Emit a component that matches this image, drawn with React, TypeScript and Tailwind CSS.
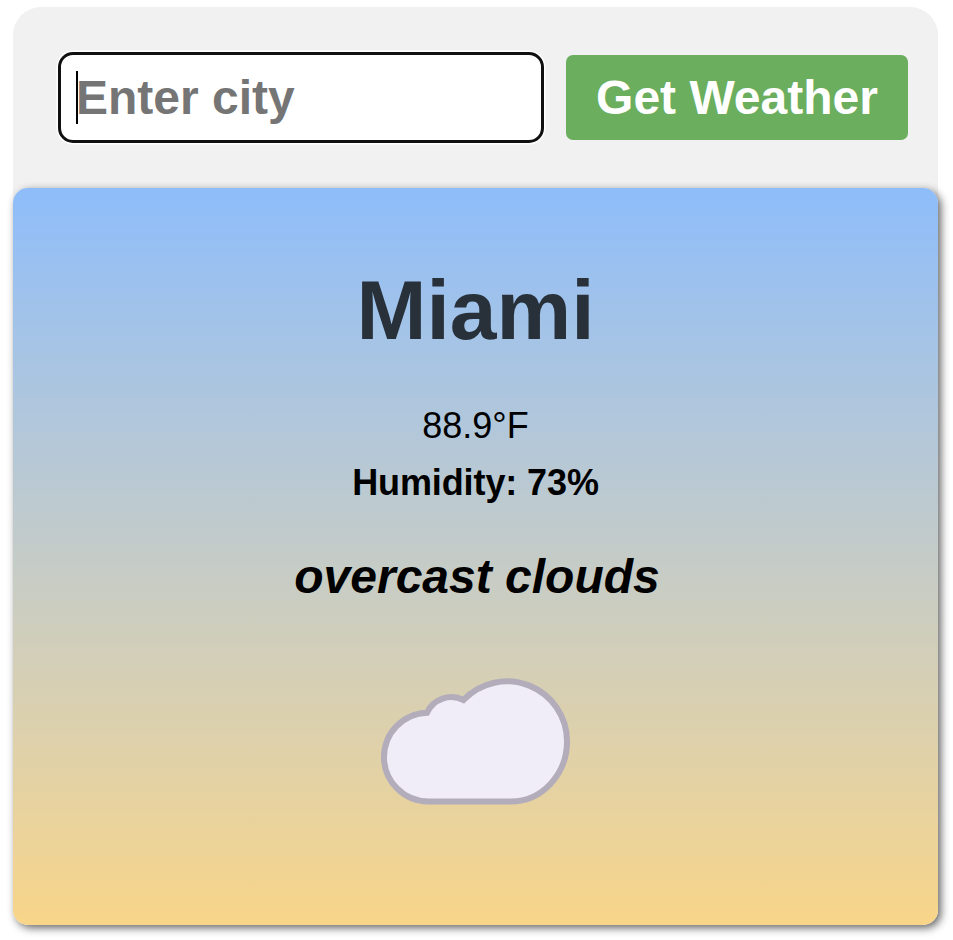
import React from "react";

function SearchBar() {
  return (
    <form
      className="flex h-[181px] items-center justify-between pr-[30px] pl-[45px]"
      onSubmit={(e) => e.preventDefault()}
    >
      <div className="relative h-[91px] w-[486px] rounded-[15px] border-3 border-[#101010] bg-white shadow-[0_0_0_1.5px_#ffffff]">
        <input
          type="text"
          placeholder="Enter city"
          className="h-full w-full bg-transparent pl-[15px] text-5xl font-bold outline-none placeholder:text-[#757575]"
        />
        <span className="absolute top-[16px] left-[15px] h-[53px] w-[2px] bg-black" />
      </div>
      <button
        type="submit"
        className="h-[85px] w-[342px] rounded-[7px] bg-[#6aae5e] text-5xl font-bold whitespace-nowrap text-white"
      >
        Get Weather
      </button>
    </form>
  );
}

function Cloud() {
  return (
    <svg width="201" height="140" viewBox="375 670 201 140" className="mt-[68px]">
      <path
        d="M428.5 801.5A44.5 44.5 0 0 1 384 757A44.5 44.5 0 0 1 427 712.7A27 27 0 0 1 463.5 700A60 60 0 0 1 567 741.5C567 774 542 801.5 511 801.5Z"
        fill="#f0edf8"
        stroke="#b2acbb"
        strokeWidth="6"
      />
    </svg>
  );
}

function WeatherCard() {
  return (
    <section className="flex h-[737px] flex-col items-center rounded-[15px] bg-linear-to-b from-[#8ebdfa] to-[#f8d588] pt-[74px] text-black shadow-[3px_3px_8px_#666666]">
      <h1 className="text-[84px] leading-[96px] font-bold text-[#28313a]">Miami</h1>
      <p className="mt-[47px] text-4xl leading-[42px]">88.9°F</p>
      <p className="mt-[15px] text-4xl leading-[42px] font-bold tracking-[-0.1px]">Humidity: 73%</p>
      <p className="mt-[48px] pl-[3px] text-5xl leading-[50px] font-bold italic">overcast clouds</p>
      <Cloud />
    </section>
  );
}

export default function App() {
  return (
    <main className="h-[940px] w-[953px] overflow-hidden bg-white pt-[7px] pl-[13px] font-['Liberation_Sans',Arial,sans-serif]">
      <div className="w-[925px] rounded-[28px] bg-[#f1f1f1]">
        <SearchBar />
        <WeatherCard />
      </div>
    </main>
  );
}
